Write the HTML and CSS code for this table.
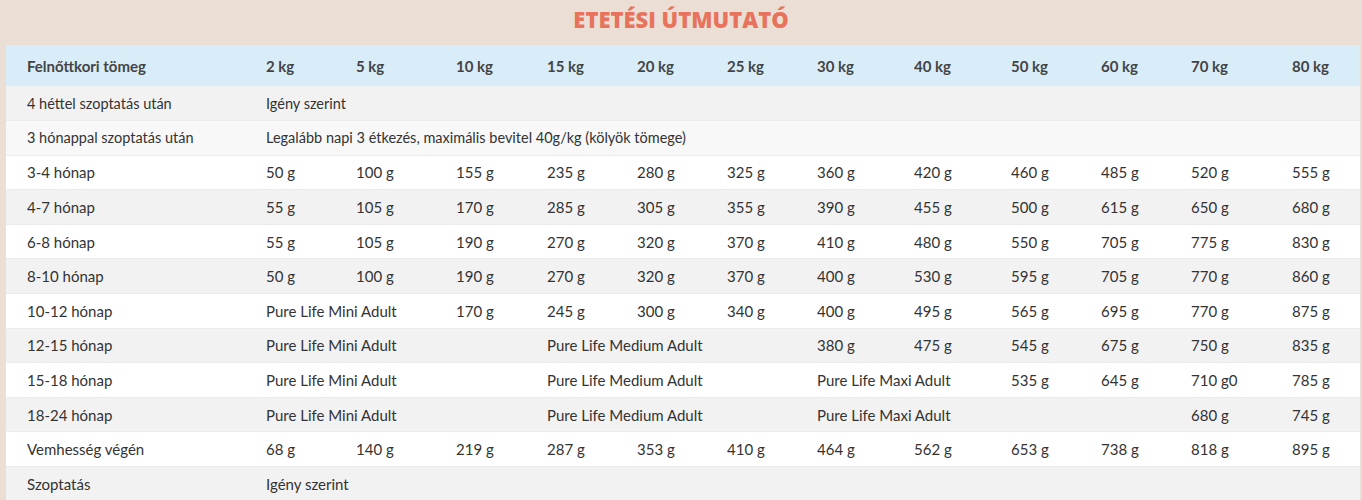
FILE: index.html
```html
<!DOCTYPE html>
<html lang="hu">
<head>
<meta charset="utf-8">
<title>Etetési útmutató</title>
<link rel="stylesheet" href="styles.css">
</head>
<body>
<h1 class="title">ETETÉSI ÚTMUTATÓ</h1>
<table class="guide">
  <colgroup>
    <col class="c0"><col class="c90"><col class="c100"><col class="c91"><col class="c90"><col class="c90"><col class="c90"><col class="c97"><col class="c97"><col class="c90"><col class="c90"><col class="c101"><col class="c68">
  </colgroup>
  <thead>
    <tr><th>Felnőttkori tömeg</th><th>2 kg</th><th>5 kg</th><th>10 kg</th><th>15 kg</th><th>20 kg</th><th>25 kg</th><th>30 kg</th><th>40 kg</th><th>50 kg</th><th>60 kg</th><th>70 kg</th><th>80 kg</th></tr>
  </thead>
  <tbody>
    <tr class="odd narrow"><td>4 héttel szoptatás után</td><td colspan="12">Igény szerint</td></tr>
    <tr class="pale narrow"><td>3 hónappal szoptatás után</td><td colspan="12">Legalább napi 3 étkezés, maximális bevitel 40g/kg (kölyök tömege)</td></tr>
    <tr><td>3-4 hónap</td><td>50 g</td><td>100 g</td><td>155 g</td><td>235 g</td><td>280 g</td><td>325 g</td><td>360 g</td><td>420 g</td><td>460 g</td><td>485 g</td><td>520 g</td><td>555 g</td></tr>
    <tr class="odd"><td>4-7 hónap</td><td>55 g</td><td>105 g</td><td>170 g</td><td>285 g</td><td>305 g</td><td>355 g</td><td>390 g</td><td>455 g</td><td>500 g</td><td>615 g</td><td>650 g</td><td>680 g</td></tr>
    <tr><td>6-8 hónap</td><td>55 g</td><td>105 g</td><td>190 g</td><td>270 g</td><td>320 g</td><td>370 g</td><td>410 g</td><td>480 g</td><td>550 g</td><td>705 g</td><td>775 g</td><td>830 g</td></tr>
    <tr class="odd"><td>8-10 hónap</td><td>50 g</td><td>100 g</td><td>190 g</td><td>270 g</td><td>320 g</td><td>370 g</td><td>400 g</td><td>530 g</td><td>595 g</td><td>705 g</td><td>770 g</td><td>860 g</td></tr>
    <tr><td>10-12 hónap</td><td colspan="2">Pure Life Mini Adult</td><td>170 g</td><td>245 g</td><td>300 g</td><td>340 g</td><td>400 g</td><td>495 g</td><td>565 g</td><td>695 g</td><td>770 g</td><td>875 g</td></tr>
    <tr class="odd"><td>12-15 hónap</td><td colspan="3">Pure Life Mini Adult</td><td colspan="3">Pure Life Medium Adult</td><td>380 g</td><td>475 g</td><td>545 g</td><td>675 g</td><td>750 g</td><td>835 g</td></tr>
    <tr><td>15-18 hónap</td><td colspan="3">Pure Life Mini Adult</td><td colspan="3">Pure Life Medium Adult</td><td colspan="2">Pure Life Maxi Adult</td><td>535 g</td><td>645 g</td><td>710 g0</td><td>785 g</td></tr>
    <tr class="odd"><td>18-24 hónap</td><td colspan="3">Pure Life Mini Adult</td><td colspan="3">Pure Life Medium Adult</td><td colspan="4">Pure Life Maxi Adult</td><td>680 g</td><td>745 g</td></tr>
    <tr><td>Vemhesség végén</td><td>68 g</td><td>140 g</td><td>219 g</td><td>287 g</td><td>353 g</td><td>410 g</td><td>464 g</td><td>562 g</td><td>653 g</td><td>738 g</td><td>818 g</td><td>895 g</td></tr>
    <tr class="odd"><td>Szoptatás</td><td colspan="12">Igény szerint</td></tr>
  </tbody>
</table>
</body>
</html>
```
FILE: styles.css
```css
html, body {
  margin: 0;
  padding: 0;
  background: #ebdfd5;
}
body {
  font-family: "Lato", "Noto Sans", sans-serif;
  color: #333333;
}
.title {
  margin: 0;
  height: 45px;
  line-height: 38px;
  text-align: center;
  font-family: "Open Sans", "Noto Sans", sans-serif;
  font-weight: 800;
  font-size: 22px;
  color: #e8735c;
  letter-spacing: 0;
}
.guide {
  margin-left: 6px;
  width: 1354px;
  table-layout: fixed;
  border-collapse: collapse;
  font-size: 15px;
}
.c0 { width: 260px; }
.c90 { width: 90px; }
.c91 { width: 91px; }
.c97 { width: 97px; }
.c100 { width: 100px; }
.c101 { width: 101px; }
.c68 { width: 68px; }
.guide th, .guide td {
  padding: 0;
  text-align: left;
  white-space: nowrap;
  overflow: hidden;
}
.guide th:first-child, .guide td:first-child {
  padding-left: 21px;
}
.guide thead tr {
  background: #d9edf8;
  height: 41px;
}
.guide th {
  font-weight: 700;
  color: #444444;
}
.guide tbody tr {
  height: 34.6px;
  background: #ffffff;
  border-top: 1px solid #ececec;
}
.guide tbody tr:first-child {
  border-top: none;
}
.guide tbody tr.odd {
  background: #f2f2f2;
}
.guide tbody tr.pale {
  background: #f8f8f8;
}
.guide tbody tr.narrow td {
  font-size: 14.5px;
}
```
